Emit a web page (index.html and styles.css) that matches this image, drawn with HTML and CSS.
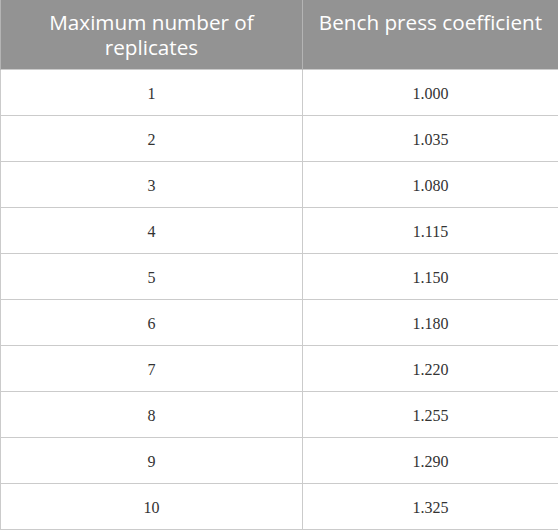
FILE: index.html
```
<!DOCTYPE html>
<html>
<head>
<meta charset="utf-8">
<link rel="stylesheet" href="styles.css">
</head>
<body>
<table class="data">
  <colgroup><col class="c1"><col class="c2"></colgroup>
  <thead>
    <tr><th>Maximum number of replicates</th><th>Bench press coefficient</th></tr>
  </thead>
  <tbody>
    <tr><td>1</td><td>1.000</td></tr>
    <tr><td>2</td><td>1.035</td></tr>
    <tr><td>3</td><td>1.080</td></tr>
    <tr><td>4</td><td>1.115</td></tr>
    <tr><td>5</td><td>1.150</td></tr>
    <tr><td>6</td><td>1.180</td></tr>
    <tr><td>7</td><td>1.220</td></tr>
    <tr><td>8</td><td>1.255</td></tr>
    <tr><td>9</td><td>1.290</td></tr>
    <tr><td>10</td><td>1.325</td></tr>
  </tbody>
</table>
</body>
</html>
```
FILE: styles.css
```
html, body { margin: 0; padding: 0; background: #fff; }
.data {
  width: 558px;
  border-collapse: collapse;
  table-layout: fixed;
}
.c1 { width: 302px; }
.c2 { width: 256px; }
.data th {
  background: #939393;
  color: #fff;
  font-family: "Open Sans", Lato, sans-serif;
  font-weight: 400;
  font-size: 20.7px;
  line-height: 25px;
  height: 69px;
  box-sizing: border-box;
  padding: 10px 6px 0;
  vertical-align: top;
  text-align: center;
  border-left: 1px solid #b4b4b4;
  border-right: 1px solid #b4b4b4;
}
.data td {
  font-family: "Liberation Serif", "Times New Roman", serif;
  font-size: 16px;
  color: #333;
  text-align: center;
  vertical-align: middle;
  height: 46px;
  box-sizing: border-box;
  padding: 4px 0 0;
  border: 1px solid #cbcbcb;
}
```
